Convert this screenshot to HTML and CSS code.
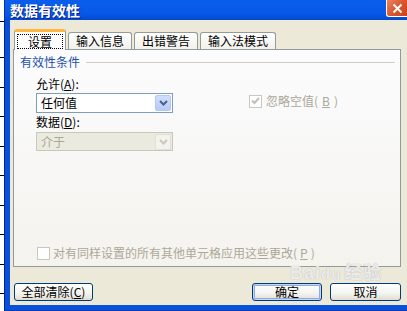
FILE: index.html
```html
<!DOCTYPE html>
<html>

<head>
    <meta charset="utf-8">
    <title>数据有效性</title>
    <link rel="stylesheet" href="styles.css">
</head>

<body>
    <div class="screen">
        <!-- worksheet peeking out behind the dialog -->
        <div class="sheet">
            <div class="row-head"></div>
            <div class="row-first"></div>
            <div></div>
            <div></div>
            <div></div>
            <div></div>
            <div></div>
            <div></div>
            <div></div>
            <div></div>
            <div></div>
        </div>

        <div class="window">
            <div class="titlebar">
                <span class="title">数据有效性</span>
                <span class="close">
                    <svg width="11" height="11" viewBox="0 0 11 11">
                        <path d="M1.5 1.5L9.5 9.5M9.5 1.5L1.5 9.5" stroke="#fff" stroke-width="2" />
                    </svg>
                </span>
            </div>

            <div class="frame">
                <div class="client">
                    <div class="tabs">
                        <div class="tab active"><span class="focus">设置</span></div>
                        <div class="tab">输入信息</div>
                        <div class="tab">出错警告</div>
                        <div class="tab">输入法模式</div>
                    </div>

                    <div class="panel">
                        <div class="legend">
                            <span>有效性条件</span>
                            <span class="rule"></span>
                        </div>

                        <div class="fields">
                            <div class="field-label">允许(<u>A</u>):</div>
                            <div></div>
                            <div class="combo">
                                <span class="combo-text">任何值</span>
                                <span class="drop">
                                    <svg width="9" height="6" viewBox="0 0 9 6">
                                        <path d="M1 1L4.5 4.5L8 1" fill="none" stroke="#4D6185" stroke-width="2" />
                                    </svg>
                                </span>
                            </div>
                            <div class="check disabled">
                                <span class="box">
                                    <svg width="9" height="8" viewBox="0 0 9 8">
                                        <path d="M1 3.5L3.5 6L8 1" fill="none" stroke="#C2C0B3" stroke-width="2" />
                                    </svg>
                                </span>
                                忽略空值(<u>B</u>)
                            </div>
                            <div class="field-label">数据(<u>D</u>):</div>
                            <div></div>
                            <div class="combo disabled">
                                <span class="combo-text">介于</span>
                                <span class="drop">
                                    <svg width="9" height="6" viewBox="0 0 9 6">
                                        <path d="M1 1L4.5 4.5L8 1" fill="none" stroke="#C9C7BA" stroke-width="2" />
                                    </svg>
                                </span>
                            </div>
                        </div>

                        <div class="check disabled apply">
                            <span class="box"></span>
                            对有同样设置的所有其他单元格应用这些更改(<u>P</u>)
                        </div>
                    </div>

                    <div class="buttons">
                        <button class="btn clear">全部清除(<u>C</u>)</button>
                        <div class="btn-group">
                            <button class="btn default">确定</button>
                            <button class="btn">取消</button>
                        </div>
                    </div>

                    <!-- site watermark over the corner -->
                    <div class="watermark">Bai<span class="paw">du</span>经验</div>
                </div>
            </div>
        </div>
    </div>
</body>

</html>
```

FILE: styles.css
```css
/* Data validation dialog, XP style */
body {
    margin: 0;
    font-family: "Noto Sans CJK SC", "Liberation Sans", sans-serif;
    font-size: 12px;
    color: #000;
}

.screen {
    display: flex;
    width: 407px;
    height: 311px;
    overflow: hidden;
}

/* worksheet strip */
.sheet {
    width: 4px;
    flex: none;
    background: #fff;
}

.sheet div {
    box-sizing: border-box;
    height: 29.5px;
    border-bottom: 1px solid #000;
}

.sheet .row-head {
    height: 22px;
}

.sheet .row-first {
    height: 36px;
}

/* window */
.window {
    flex: 1;
    display: flex;
    flex-direction: column;
    min-width: 0;
}

.titlebar {
    height: 20px;
    flex: none;
    display: flex;
    justify-content: space-between;
    align-items: flex-start;
    padding-left: 6px;
    background: linear-gradient(#0B5EEC, #0758E6 70%, #0349CF);
    box-shadow: inset 1px 0 #0A2FA8;
}

.title {
    margin-top: 1px;
    color: #fff;
    font-weight: bold;
    font-size: 14px;
    line-height: 18px;
    text-shadow: 1px 1px #0A1C86;
}

.close {
    width: 20px;
    height: 16px;
    display: flex;
    align-items: center;
    justify-content: center;
    border: 1px solid #fff;
    border-top: none;
    border-right: none;
    border-radius: 0 0 0 3px;
    background: linear-gradient(135deg, #EB8462, #DA5229 55%, #C7431B);
}

.frame {
    flex: 1;
    display: flex;
    padding: 0 0 6px 6px;
    background: #0A51DA;
    box-shadow: inset 1px 0 #00239E, inset 0 -1px #0A3AB5;
}

.client {
    position: relative;
    flex: 1;
    display: flex;
    flex-direction: column;
    padding: 9px 6px 4px 3px;
    background: #ECE9D8;
}

/* tabs */
.tabs {
    display: flex;
    align-items: flex-end;
    height: 21px;
    margin-bottom: -1px;
    padding-left: 1px;
}

.tab {
    box-sizing: border-box;
    height: 18px;
    margin-right: 2px;
    padding: 0 7px;
    line-height: 16px;
    border: 1px solid #919B9C;
    border-bottom: none;
    border-radius: 3px 3px 0 0;
    background: linear-gradient(#FEFEFE, #F1F0EA);
    white-space: nowrap;
}

.tab.active {
    position: relative;
    z-index: 1;
    height: 21px;
    padding: 2px 2px 0;
    line-height: 13px;
    border-top: 3px solid #FFB640;
    background: linear-gradient(#FFFFFF, #FCFCFE);
}

.focus {
    display: block;
    padding: 0 10px;
    border: 1px dotted #000;
}

/* panel */
.panel {
    flex: 1;
    display: flex;
    flex-direction: column;
    padding: 5px 5px 6px 6px;
    border: 1px solid #919B9C;
    background: linear-gradient(#FCFCFE, #F4F3EE);
}

.legend {
    display: flex;
    align-items: center;
    height: 14px;
    line-height: 14px;
    color: #1D4FA8;
}

.legend .rule {
    flex: 1;
    height: 1px;
    margin-left: 6px;
    background: #D0D0BF;
}

.fields {
    display: grid;
    grid-template-columns: 137px auto;
    grid-template-rows: 14px 20px 14px 20px;
    column-gap: 76px;
    row-gap: 2px;
    margin: 8px 0 0 16px;
}

.field-label {
    line-height: 14px;
}

.combo {
    box-sizing: border-box;
    display: flex;
    align-items: center;
    padding: 1px;
    border: 1px solid #7F9DB9;
    background: #fff;
}

.combo.disabled {
    margin-top: 1px;
    border-color: #C9C7BA;
    background: #EBEADF;
    color: #ACA899;
}

.combo-text {
    flex: 1;
    padding-left: 3px;
    line-height: 16px;
}

.drop {
    box-sizing: border-box;
    width: 16px;
    height: 16px;
    display: flex;
    align-items: center;
    justify-content: center;
    border: 1px solid #B4C8F5;
    border-radius: 2px;
    background: linear-gradient(#D1DEFD, #B6CBF8);
}

.combo.disabled .drop {
    border-color: #E2E0D6;
    background: #F3F2EC;
}

.check {
    display: flex;
    align-items: center;
    gap: 4px;
    line-height: 14px;
    white-space: nowrap;
}

.check.disabled {
    color: #ACA899;
}

.fields .check {
    align-self: start;
    margin-top: 1px;
}

.box {
    box-sizing: border-box;
    width: 13px;
    height: 13px;
    display: flex;
    align-items: center;
    justify-content: center;
    border: 1px solid #CAC8BB;
    background: #fff;
}

.apply {
    margin: auto 0 0 17px;
    gap: 3px;
}

/* buttons */
.buttons {
    display: flex;
    justify-content: space-between;
    margin-top: 16px;
    padding-left: 1px;
}

.btn-group {
    display: flex;
    gap: 8px;
}

.btn {
    box-sizing: border-box;
    height: 18px;
    padding: 0;
    font: inherit;
    line-height: 14px;
    color: #000;
    border: 1px solid #003C74;
    border-radius: 3px;
    background: linear-gradient(#FFFFFF, #F3F3EF 60%, #DEDCD3);
}

.btn.clear {
    width: 79px;
}

.btn.default {
    width: 70px;
    box-shadow: inset 0 0 0 1px #C4D6F7, inset 0 0 0 2px #8FA9E8;
}

.btn-group .btn:last-child {
    width: 71px;
}

.watermark {
    position: absolute;
    left: 280px;
    top: 247px;
    font-family: "Liberation Sans", "Noto Sans CJK SC", sans-serif;
    font-size: 18px;
    line-height: 13px;
    font-weight: bold;
    color: rgba(255, 255, 255, 0.7);
    text-shadow: 0 0 1px #C0C0C0, 0 0 1px #C0C0C0;
    letter-spacing: 1px;
}

.watermark .paw {
    margin-right: 3px;
    font-size: 15px;
}
```
